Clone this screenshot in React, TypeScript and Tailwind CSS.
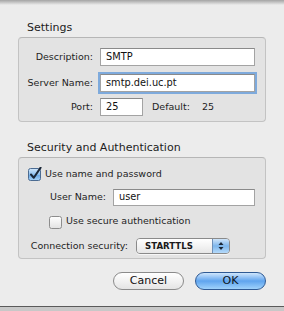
import React from 'react'

const font = { fontFamily: '"DejaVu Sans", "Liberation Sans", sans-serif' }

function CheckBox({ checked }: { checked: boolean }) {
  return (
    <svg width="14" height="14" viewBox="0 0 14 14" className="shrink-0">
      <defs>
        <linearGradient id="cbOn" x1="0" y1="0" x2="0" y2="1">
          <stop offset="0" stopColor="#d4e8fb" />
          <stop offset="0.5" stopColor="#8ec0ee" />
          <stop offset="0.55" stopColor="#6aa9e6" />
          <stop offset="1" stopColor="#a9d3f7" />
        </linearGradient>
        <linearGradient id="cbOff" x1="0" y1="0" x2="0" y2="1">
          <stop offset="0" stopColor="#ffffff" />
          <stop offset="0.5" stopColor="#f1f1f1" />
          <stop offset="1" stopColor="#e2e2e2" />
        </linearGradient>
      </defs>
      <rect x="0.5" y="1.5" width="12" height="12" rx="2" fill={checked ? 'url(#cbOn)' : 'url(#cbOff)'} stroke={checked ? '#4b6b91' : '#8d8d8d'} />
      {checked && <path d="M3 7.5 L5.8 10.8 L12.6 0.6" fill="none" stroke="#1b2737" strokeWidth="2" strokeLinecap="round" strokeLinejoin="round" />}
    </svg>
  )
}

function Input({ value, className, focus }: { value: string; className: string; focus?: boolean }) {
  return (
    <div
      className={`bg-white border border-[#a3a3a3] border-t-[#8a8a8a] h-[18px] flex items-center pl-[5px] text-[9.8px] text-[#111] ${focus ? 'shadow-[0_0_0_2px_#7eaadc]' : ''} ${className}`}
    >
      {value}
    </div>
  )
}

export default function App() {
  return (
    <div className="w-[284px] h-[311px] bg-[#c8c8c8] overflow-hidden" style={font}>
      <div className="h-[307px] bg-[#ececec] border-b border-[#5a5a5a] flex flex-col">
        <div className="h-[5px] bg-gradient-to-b from-[#a4a4a4] to-[#ececec]" />
        <div className="px-[18px]">
          <div className="mt-[16px] mb-[3px] pl-[9px] text-[11px] leading-[13px] text-[#1c1c1c]">Settings</div>
          <div className="h-[85px] bg-[#e3e3e3] border border-[#c3c3c3] border-t-[#b6b6b6] rounded-[4px] pt-[10px] flex flex-col text-[9.5px] text-[#1e1e1e]">
            <div className="flex items-center h-[18px]">
              <div className="w-[74px] text-right">Description:</div>
              <Input value="SMTP" className="ml-[7px] w-[155px]" />
            </div>
            <div className="flex items-center h-[18px] mt-[8px]">
              <div className="w-[74px] text-right">Server Name:</div>
              <Input value="smtp.dei.uc.pt" className="ml-[7px] w-[155px]" focus />
            </div>
            <div className="flex items-center h-[18px] mt-[6px]">
              <div className="w-[74px] text-right">Port:</div>
              <Input value="25" className="ml-[7px] w-[43px]" />
              <div className="ml-[9px]">Default:</div>
              <div className="ml-[12px]">25</div>
            </div>
          </div>

          <div className="mt-[19px] mb-[3px] pl-[9px] text-[11px] leading-[13px] text-[#1c1c1c]">Security and Authentication</div>
          <div className="h-[102px] bg-[#e3e3e3] border border-[#c3c3c3] border-t-[#b6b6b6] rounded-[4px] pt-[9px] pl-[9px] flex flex-col text-[9.5px] text-[#1e1e1e]">
            <div className="flex items-center h-[14px]">
              <CheckBox checked />
              <span className="ml-[3px]">Use name and password</span>
            </div>
            <div className="flex items-center h-[17px] mt-[8px]">
              <div className="w-[78px] text-right">User Name:</div>
              <Input value="user" className="ml-[7px] w-[142px] !h-[17px]" />
            </div>
            <div className="flex items-center h-[13px] mt-[9px] ml-[21px]">
              <CheckBox checked={false} />
              <span className="ml-[3px]">Use secure authentication</span>
            </div>
            <div className="flex items-center h-[16px] mt-[10px]">
              <div className="w-[100px] text-right whitespace-nowrap">Connection security:</div>
              <div className="ml-[8px] w-[94px] h-[16px] flex rounded-[4px] border border-[#8a8a8a] overflow-hidden shadow-[0_1px_0_#f6f6f6]">
                <div className="flex-1 bg-gradient-to-b from-white via-[#f3f3f3] to-[#e6e6e6] flex items-center pl-[8px] text-[8.6px] font-bold text-[#1a1a1a]">
                  STARTTLS
                </div>
                <div className="w-[17px] border-l border-[#6d8fb8] bg-gradient-to-b from-[#cfe4f9] via-[#7db6ec] to-[#b5dafa] flex items-center justify-center">
                  <svg width="6" height="10" viewBox="0 0 6 10">
                    <path d="M0.5 4 L3 1 L5.5 4 Z" fill="#1a2636" />
                    <path d="M0.5 6 L3 9 L5.5 6 Z" fill="#1a2636" />
                  </svg>
                </div>
              </div>
            </div>
          </div>

          <div className="flex justify-end gap-[11px] mt-[13px]">
            <div className="w-[71px] h-[18px] rounded-full border border-[#8b8b8b] bg-gradient-to-b from-white via-[#f2f2f2] to-[#e4e4e4] flex items-center justify-center text-[11px] text-[#111]">
              Cancel
            </div>
            <div className="w-[71px] h-[18px] rounded-full border border-[#2f5a94] bg-gradient-to-b from-[#cfe6fc] via-[#5fa4ee] to-[#9fd2fb] flex items-center justify-center text-[11px] text-[#0d1623]">
              OK
            </div>
          </div>
        </div>
      </div>
    </div>
  )
}
